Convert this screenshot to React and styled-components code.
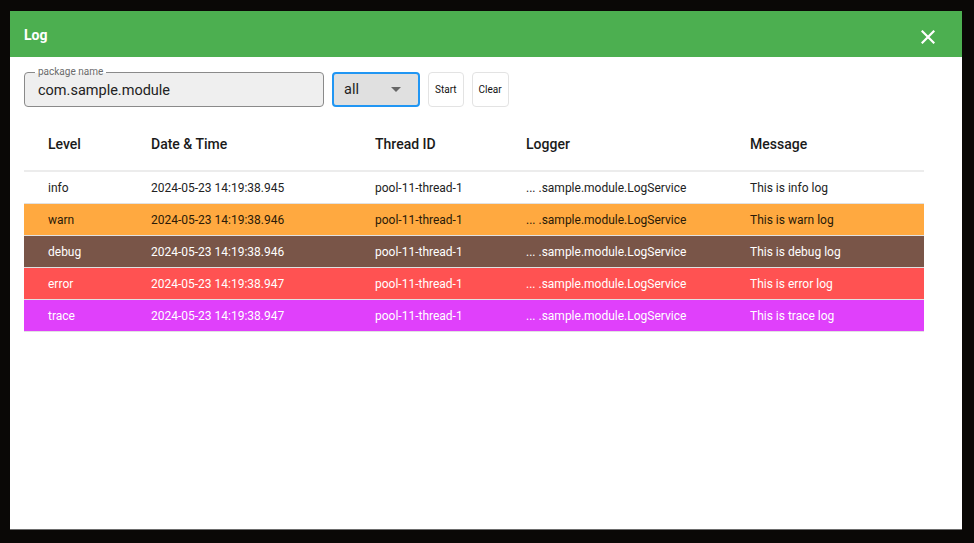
import React from "react";
import styled, { createGlobalStyle } from "styled-components";

const Global = createGlobalStyle`
  html, body { margin: 0; padding: 0; }
  body {
    background: #0a0806;
    font-family: Roboto, "Liberation Sans", Arial, sans-serif;
    width: 974px;
    height: 543px;
    overflow: hidden;
  }
`;

const Page = styled.div`
  padding: 11px 0 0 10px;
`;

const Dialog = styled.div`
  width: 952px;
  height: 518px;
  background: #fff;
  display: flex;
  flex-direction: column;
  box-shadow: 0 1px 0 #6d6d6d;
`;

const Header = styled.div`
  height: 46px;
  background: #4caf50;
  display: flex;
  align-items: center;
  justify-content: space-between;
  padding: 0 26px 0 14px;
  flex-shrink: 0;
`;

const Title = styled.div`
  color: #fff;
  font-size: 14px;
  font-weight: 700;
  margin-top: 1px;
`;

const CloseButton = styled.button`
  border: 0;
  background: transparent;
  padding: 0;
  width: 16px;
  height: 16px;
  display: flex;
  align-items: center;
  justify-content: center;
  cursor: pointer;
  margin-top: 5px;
`;

const Content = styled.div`
  padding: 15px 14px;
  display: flex;
  flex-direction: column;
`;

const Toolbar = styled.div`
  display: flex;
  align-items: center;
  gap: 8px;
  height: 35px;
`;

const Field = styled.div`
  position: relative;
  width: 300px;
  height: 35px;
  box-sizing: border-box;
  border: 1px solid #8a8a8a;
  border-radius: 4px;
  background: #efefef;
  display: flex;
  align-items: center;
  padding: 0 13px;
`;

const FieldLabel = styled.span`
  position: absolute;
  left: 10px;
  top: -7px;
  padding: 0 3px;
  font-size: 10px;
  line-height: 12px;
  color: #6b6b6b;
  background: linear-gradient(#fff 0 7px, #efefef 7px);
`;

const FieldValue = styled.span`
  font-size: 14.5px;
  color: #222;
  margin-top: 1px;
`;

const Select = styled.div`
  width: 88px;
  height: 35px;
  box-sizing: border-box;
  border: 2px solid #2196f3;
  border-radius: 4px;
  background: #e0e0e0;
  display: flex;
  align-items: center;
  justify-content: space-between;
  padding: 0 17px 0 10px;
`;

const SelectValue = styled.span`
  font-size: 14.5px;
  color: #222;
`;

const Button = styled.button`
  height: 35px;
  box-sizing: border-box;
  border: 1px solid #e3e3e3;
  border-radius: 4px;
  background: #fff;
  padding: 0 6px;
  font-family: Roboto, "Liberation Sans", Arial, sans-serif;
  font-size: 10px;
  color: #111;
  cursor: pointer;
`;

const Table = styled.table`
  margin-top: 13px;
  width: 900px;
  border-collapse: collapse;
  table-layout: fixed;
`;

const HeadCell = styled.th`
  text-align: left;
  font-size: 14px;
  font-weight: 500;
  color: #1a1a1a;
  height: 51px;
  padding: 0 0 2px 24px;
  border-bottom: 2px solid #ececec;
  box-sizing: border-box;
`;

const ROW_STYLES = {
  info: { bg: "#ffffff", fg: "#222222" },
  warn: { bg: "#ffa940", fg: "#2a1a08" },
  debug: { bg: "#795548", fg: "#ffffff" },
  error: { bg: "#ff5252", fg: "#ffffff" },
  trace: { bg: "#e040fb", fg: "#ffffff" },
};

const Row = styled.tr`
  background: ${(p) => ROW_STYLES[p.$level].bg};
  color: ${(p) => ROW_STYLES[p.$level].fg};
`;

const Cell = styled.td`
  font-size: 12px;
  height: 31px;
  padding: 0 0 0 24px;
  border-bottom: 1px solid rgba(200, 200, 200, 0.55);
  white-space: nowrap;
  overflow: hidden;
`;

const columns = [
  { key: "level", label: "Level", width: 103 },
  { key: "time", label: "Date & Time", width: 224 },
  { key: "thread", label: "Thread ID", width: 151 },
  { key: "logger", label: "Logger", width: 224 },
  { key: "message", label: "Message", width: 198 },
];

const rows = [
  { level: "info", time: "2024-05-23 14:19:38.945" },
  { level: "warn", time: "2024-05-23 14:19:38.946" },
  { level: "debug", time: "2024-05-23 14:19:38.946" },
  { level: "error", time: "2024-05-23 14:19:38.947" },
  { level: "trace", time: "2024-05-23 14:19:38.947" },
].map((r) => ({
  ...r,
  thread: "pool-11-thread-1",
  logger: "... .sample.module.LogService",
  message: `This is ${r.level} log`,
}));

export default function App() {
  return (
    <>
      <Global />
      <Page>
        <Dialog>
          <Header>
            <Title>Log</Title>
            <CloseButton aria-label="close">
              <svg width="14" height="14" viewBox="0 0 14 14">
                <path d="M1.5 1.5 L12.5 12.5 M12.5 1.5 L1.5 12.5" stroke="#fff" strokeWidth="2.2" strokeLinecap="square" />
              </svg>
            </CloseButton>
          </Header>
          <Content>
            <Toolbar>
              <Field>
                <FieldLabel>package name</FieldLabel>
                <FieldValue>com.sample.module</FieldValue>
              </Field>
              <Select>
                <SelectValue>all</SelectValue>
                <svg width="10" height="5" viewBox="0 0 10 5">
                  <path d="M0 0 L10 0 L5 5 Z" fill="#666" />
                </svg>
              </Select>
              <Button>Start</Button>
              <Button>Clear</Button>
            </Toolbar>
            <Table>
              <colgroup>
                {columns.map((c) => (
                  <col key={c.key} style={{ width: c.width }} />
                ))}
              </colgroup>
              <thead>
                <tr>
                  {columns.map((c) => (
                    <HeadCell key={c.key}>{c.label}</HeadCell>
                  ))}
                </tr>
              </thead>
              <tbody>
                {rows.map((r, i) => (
                  <Row key={i} $level={r.level}>
                    {columns.map((c) => (
                      <Cell key={c.key}>{r[c.key]}</Cell>
                    ))}
                  </Row>
                ))}
              </tbody>
            </Table>
          </Content>
        </Dialog>
      </Page>
    </>
  );
}
